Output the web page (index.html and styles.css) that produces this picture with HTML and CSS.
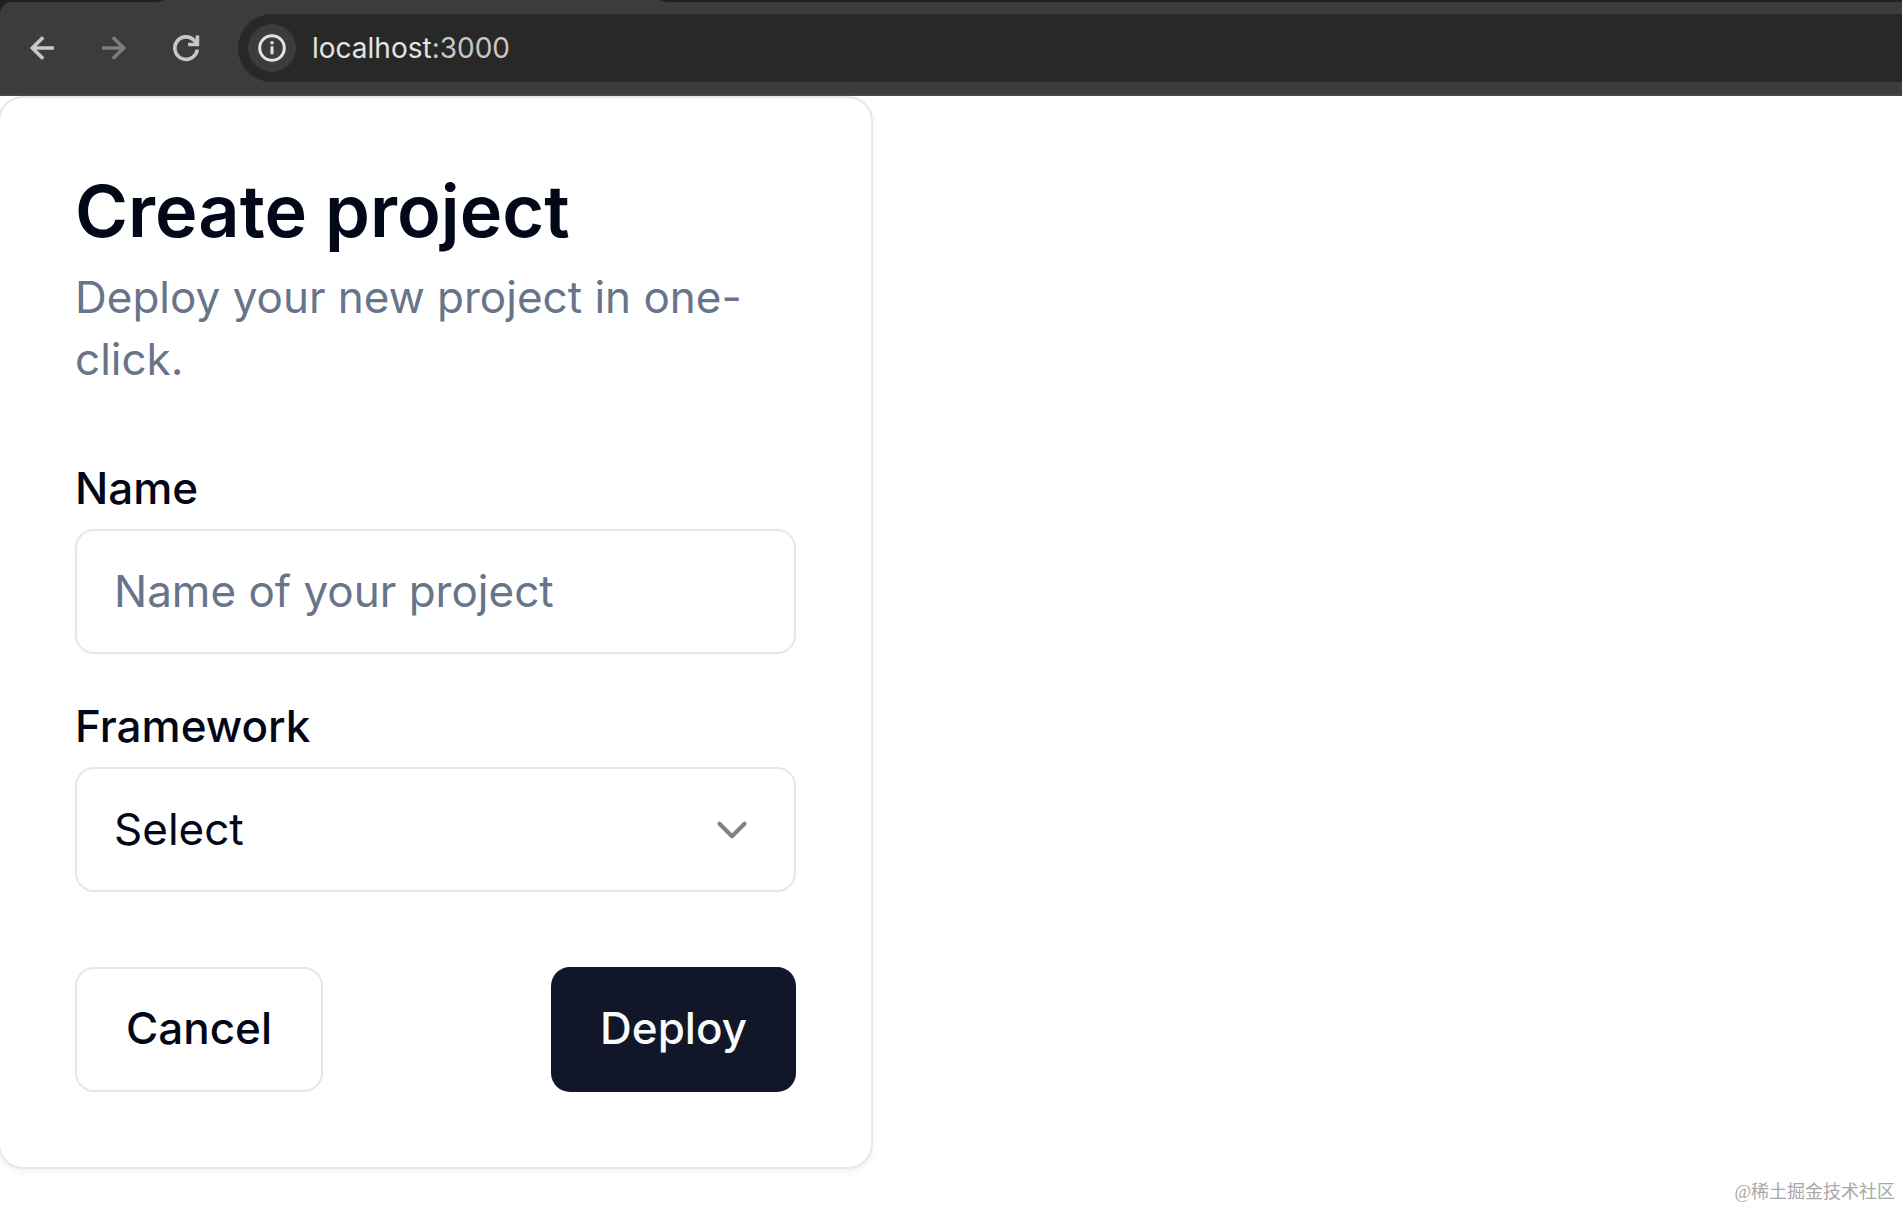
FILE: index.html
```html
<!DOCTYPE html>
<html lang="en">
<head>
<meta charset="utf-8">
<meta name="viewport" content="width=device-width, initial-scale=1">
<title>Create project</title>
<link rel="stylesheet" href="styles.css">
</head>
<body>
<header class="browser">
  <div class="tabs"><span class="tab-edge"></span><span class="tab-active"></span><span class="tab-rest"></span></div>
  <nav class="toolbar" aria-label="Browser">
    <div class="nav-buttons">
      <button class="nav-button" type="button" aria-label="Back">
        <svg viewBox="0 0 24 24"><path d="M20 12H6M12.800 4.800 5.600 12l7.200 7.200" /></svg>
      </button>
      <button class="nav-button nav-button-muted" type="button" aria-label="Forward">
        <svg viewBox="0 0 24 24"><path d="M4 12h14M11.200 4.800l7.200 7.200-7.200 7.200" /></svg>
      </button>
      <button class="nav-button" type="button" aria-label="Reload">
        <svg viewBox="0 0 24 24"><path d="M19.500 13a7.500 7.500 0 1 1-2.100-6.200L19.400 9" /><path d="M19.600 3.600v6.100h-6.200" /></svg>
      </button>
    </div>
    <div class="address">
      <button class="site-info" type="button" aria-label="Site information">
        <svg viewBox="0 0 28 28"><circle cx="14" cy="14" r="12.300" /><path d="M14 12.200v8M14 7.200v3" /></svg>
      </button>
      <a class="url" href="#">localhost<span class="port">:3000</span></a>
    </div>
  </nav>
</header>
<main class="page">
  <form class="card">
    <div class="card-header">
      <h1 class="card-title">Create project</h1>
      <p class="card-description">Deploy your new project in one-click.</p>
    </div>
    <div class="fields">
      <div class="field">
        <label class="label" for="name">Name</label>
        <input class="control" id="name" type="text" placeholder="Name of your project">
      </div>
      <div class="field">
        <label class="label" for="framework">Framework</label>
        <div class="select-wrap">
          <select class="control" id="framework"><option>Select</option></select>
          <svg class="chevron" viewBox="0 0 24 24" aria-hidden="true"><path d="m6 9 6 6 6-6" /></svg>
        </div>
      </div>
    </div>
    <div class="actions">
      <button class="button button-outline" type="button">Cancel</button>
      <button class="button button-primary" type="button">Deploy</button>
    </div>
  </form>
</main>
<footer class="credit" lang="zh-CN">@稀土掘金技术社区</footer>
</body>
</html>
```
FILE: styles.css
```css
* { box-sizing: border-box; }

body {
  margin: 0;
  background: #fff;
  color: #020817;
  font-family: Inter, "Liberation Sans", sans-serif;
  overflow-x: hidden;
}

button, input, select { font: inherit; color: inherit; margin: 0; }

/* Browser bar */
.browser {
  background: #3c3c3c;
  border-bottom: 2px solid #4a4546;
}

.tabs {
  display: flex;
  height: 2px;
}

.tab-edge {
  width: 164px;
  border-bottom-right-radius: 10px 2px;
  background: #202121;
}

.tab-active { width: 496px; }

.tab-rest {
  flex: 1;
  border-bottom-left-radius: 10px 2px;
  background: #202121;
}

.toolbar {
  display: flex;
  align-items: center;
  gap: 34px;
  padding: 12px 0 12px 24px;
  background: radial-gradient(circle at 14px 14px, #3c3c3c 14px, #202121 15px) 0 0 / 14px 14px no-repeat;
}

.nav-buttons {
  display: flex;
  gap: 36px;
}

.nav-button {
  width: 36px;
  height: 36px;
  padding: 0;
  border: 0;
  background: none;
  color: #c7c7c7;
}

.nav-button-muted { color: #7d7d7d; }

.nav-button svg {
  display: block;
  width: 36px;
  height: 36px;
  fill: none;
  stroke: currentColor;
  stroke-width: 2.4;
}

.address {
  display: flex;
  flex: 1;
  align-items: center;
  gap: 16px;
  height: 68px;
  padding-left: 10px;
  border-radius: 34px 0 0 34px;
  background: #282828;
}

.site-info {
  display: grid;
  place-items: center;
  width: 48px;
  height: 48px;
  padding: 0;
  border: 0;
  border-radius: 50%;
  background: #3c3c3c;
  color: #e3e3e3;
}

.site-info svg {
  width: 28px;
  height: 28px;
  fill: none;
  stroke: currentColor;
  stroke-width: 3;
}

.url {
  color: #e3e3e3;
  font-size: 28px;
  text-decoration: none;
}

.port { color: #c7c7c7; }

/* Card */
.page { font-size: 44px; }

.card {
  width: 875px;
  max-width: 100%;
  margin-left: -2px;
  padding: 75px;
  border: 2px solid #e2e8f0;
  border-radius: 25px;
  box-shadow: 0 3px 6px rgba(0, 0, 0, 0.05);
}

.card-header {
  display: grid;
  gap: 18px;
}

.card-title {
  margin: 0;
  font-size: 72px;
  font-weight: 600;
  line-height: 75px;
}

.card-description {
  margin: 0;
  color: #677489;
  line-height: 62px;
}

.fields {
  display: grid;
  gap: 50px;
  margin: 76px 0 75px;
}

.field {
  display: grid;
  gap: 19px;
}

.label {
  font-weight: 500;
  line-height: 44px;
}

.control {
  width: 100%;
  height: 125px;
  padding: 0 37px 2px;
  border: 2px solid #e2e8f0;
  border-radius: 19px;
  background: #fff;
  appearance: none;
}

.control::placeholder { color: #677489; opacity: 1; }

.select-wrap {
  display: grid;
  align-items: center;
}

.select-wrap > * { grid-area: 1 / 1; }

.chevron {
  justify-self: end;
  width: 50px;
  height: 50px;
  margin-right: 39px;
  fill: none;
  stroke: #80838b;
  stroke-width: 2;
  stroke-linecap: round;
  stroke-linejoin: round;
  pointer-events: none;
}

.actions {
  display: flex;
  justify-content: space-between;
}

.button {
  height: 125px;
  padding: 0 49px 4px;
  border: 0;
  border-radius: 19px;
  font-weight: 500;
}

.button-outline {
  border: 2px solid #e2e8f0;
  background: #fff;
}

.button-primary {
  background: #111628;
  color: #f8fafc;
}

.credit {
  padding: 10px 7px 3px 0;
  color: #a8a8a8;
  font: 18px/26px "Liberation Serif", "Noto Sans CJK SC", serif;
  text-align: right;
}
```
